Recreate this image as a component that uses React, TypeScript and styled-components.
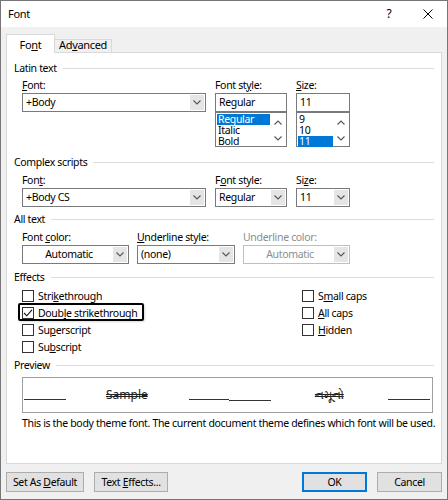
import * as React from 'react'
import styled, { createGlobalStyle } from 'styled-components'

const FONT = `"Noto Sans", "Open Sans", sans-serif`

const GlobalStyle = createGlobalStyle`
  html, body {
    margin: 0;
    padding: 0;
    background: #fff;
  }
  body {
    font-family: ${FONT};
    font-size: 10.5px;
    letter-spacing: -0.33px;
    color: #000;
  }
  * {
    box-sizing: border-box;
  }
`

const Chevron = ({ dir = 'down' }: { dir?: 'up' | 'down' }) => (
  <svg width="8" height="5" viewBox="0 0 8 5">
    <path
      d={dir === 'down' ? 'M0.5 0.5 L4 4 L7.5 0.5' : 'M0.5 4.5 L4 1 L7.5 4.5'}
      fill="none"
      stroke="#555"
      strokeWidth="1.1"
    />
  </svg>
)

type ComboProps = {
  value: string
  center?: boolean
  disabled?: boolean
  drop?: boolean
}

const ComboBox = ({ value, center, disabled, drop = true }: ComboProps) => (
  <Combo $disabled={disabled}>
    <ComboText $center={center}>{value}</ComboText>
    {drop && (
      <DropBtn>
        <Chevron />
      </DropBtn>
    )}
  </Combo>
)

const List = ({ items, selected }: { items: string[]; selected: number }) => (
  <ListBox>
    <ListItems>
      {items.map((it, i) => (
        <ListItem key={it} $selected={i === selected}>
          {it}
        </ListItem>
      ))}
    </ListItems>
    <ScrollCol>
      <Chevron dir="up" />
      <Chevron />
    </ScrollCol>
  </ListBox>
)

const Check = ({ label, checked, focused }: { label: React.ReactNode; checked?: boolean; focused?: boolean }) => (
  <CheckRow $focused={focused}>
    <Box>
      {checked && (
        <svg width="10" height="10" viewBox="0 0 10 10">
          <path d="M1 5 L3.8 7.8 L9 1.8" fill="none" stroke="#111" strokeWidth="1.1" />
        </svg>
      )}
    </Box>
    <span>{label}</span>
  </CheckRow>
)

export default function App() {
  return (
    <>
      <GlobalStyle />
      <Window>
        <TitleBar>
          <TitleText>Font</TitleText>
          <HelpBtn>?</HelpBtn>
          <CloseBtn>
            <svg width="10" height="10" viewBox="0 0 10 10">
              <path d="M0.5 0.5 L9.5 9.5 M9.5 0.5 L0.5 9.5" stroke="#000" strokeWidth="1" />
            </svg>
          </CloseBtn>
        </TitleBar>

        <Body>
          <TabStrip>
            <Tab $active>
              Fo<U>n</U>t
            </Tab>
            <Tab>
              Ad<U>v</U>anced
            </Tab>
          </TabStrip>

          <Panel>
            <Heading>Latin text</Heading>
            <FieldRow $cols="184px 72px 54px">
              <Field>
                <Label>
                  <U>F</U>ont:
                </Label>
                <ComboBox value="+Body" />
              </Field>
              <Field>
                <Label>
                  Font st<U>y</U>le:
                </Label>
                <ComboBox value="Regular" drop={false} />
                <List items={['Regular', 'Italic', 'Bold']} selected={0} />
              </Field>
              <Field>
                <Label>
                  <U>S</U>ize:
                </Label>
                <ComboBox value="11" drop={false} />
                <List items={['9', '10', '11']} selected={2} />
              </Field>
            </FieldRow>

            <Heading $mt={8}>Complex scripts</Heading>
            <FieldRow $cols="184px 72px 54px" $mt={4}>
              <Field>
                <Label>
                  Fon<U>t</U>:
                </Label>
                <ComboBox value="+Body CS" />
              </Field>
              <Field>
                <Label>
                  F<U>o</U>nt style:
                </Label>
                <ComboBox value="Regular" />
              </Field>
              <Field>
                <Label>
                  Si<U>z</U>e:
                </Label>
                <ComboBox value="11" />
              </Field>
            </FieldRow>

            <Heading $mt={5}>All text</Heading>
            <FieldRow $cols="107px 98px 107px" $gap={8} $mt={4}>
              <Field>
                <Label>
                  Font <U>c</U>olor:
                </Label>
                <ComboBox value="Automatic" center />
              </Field>
              <Field>
                <Label>
                  <U>U</U>nderline style:
                </Label>
                <ComboBox value="(none)" />
              </Field>
              <Field>
                <Label $disabled>Underline color:</Label>
                <ComboBox value="Automatic" center disabled />
              </Field>
            </FieldRow>

            <Heading $mt={6}>Effects</Heading>
            <Effects>
              <CheckCol $width={280}>
                <Check label={<>Stri<U>k</U>ethrough</>} />
                <Check label={<>Doub<U>l</U>e strikethrough</>} checked focused />
                <Check label={<>Su<U>p</U>erscript</>} />
                <Check label={<>Su<U>b</U>script</>} />
              </CheckCol>
              <CheckCol>
                <Check label={<>S<U>m</U>all caps</>} />
                <Check label={<><U>A</U>ll caps</>} />
                <Check label={<><U>H</U>idden</>} />
              </CheckCol>
            </Effects>

            <Heading $mt={3}>Preview</Heading>
            <PreviewBox>
              <Rule $w={42} $ml={0} />
              <Sample $ml={40}>Sample</Sample>
              <Rule $w={40} $ml={41} />
              <Rule $w={42} $ml={0} $drop={1} />
              <Sample $ml={44}>નમૂનો</Sample>
              <Rule $w={42} $ml={44} />
            </PreviewBox>
            <Note>This is the body theme font. The current document theme defines which font will be used.</Note>
          </Panel>

          <ButtonRow>
            <Button $w={78}>Set As <U>D</U>efault</Button>
            <Button $w={74}>Text <U>E</U>ffects...</Button>
            <Spacer />
            <Button $w={65} $default>
              OK
            </Button>
            <Button $w={65}>Cancel</Button>
          </ButtonRow>
        </Body>
      </Window>
    </>
  )
}

const Window = styled.div`
  width: 448px;
  height: 500px;
  border: 1px solid #767676;
  background: #f0f0f0;
  display: flex;
  flex-direction: column;
  overflow: hidden;
`

const TitleBar = styled.div`
  height: 26px;
  background: #fff;
  display: flex;
  align-items: center;
  padding-left: 7px;
  line-height: 14px;
  font-size: 11px;
`

const TitleText = styled.div`
  flex: 1;
`

const HelpBtn = styled.div`
  width: 10px;
  text-align: center;
  font-size: 12px;
  margin-right: 29px;
`

const CloseBtn = styled.div`
  width: 10px;
  height: 10px;
  display: flex;
  margin-right: 14px;
`

const Body = styled.div`
  flex: 1;
  padding: 7px 5px 0 5px;
  display: flex;
  flex-direction: column;
`

const TabStrip = styled.div`
  height: 18px;
  display: flex;
  align-items: flex-end;
  position: relative;
  z-index: 1;
`

const Tab = styled.div<{ $active?: boolean }>`
  display: flex;
  align-items: flex-end;
  justify-content: center;
  border: 1px solid #d9d9d9;
  border-bottom: none;
  line-height: 14px;
  font-size: 11px;
  width: ${(p) => (p.$active ? 49 : 57)}px;
  height: ${(p) => (p.$active ? 19 : 13)}px;
  margin-bottom: ${(p) => (p.$active ? -1 : 0)}px;
  padding-bottom: ${(p) => (p.$active ? 1 : 0)}px;
  background: ${(p) => (p.$active ? '#fff' : '#f0f0f0')};
  border-left: ${(p) => (p.$active ? '1px solid #d9d9d9' : 'none')};
`

const Panel = styled.div`
  height: 412px;
  background: #fff;
  border: 1px solid #d9d9d9;
  padding: 8px 7px 0 7px;
`

const Heading = styled.div<{ $mt?: number }>`
  display: flex;
  align-items: center;
  height: 14px;
  line-height: 14px;
  margin-top: ${(p) => p.$mt ?? 0}px;
  &::after {
    content: '';
    flex: 1;
    height: 1px;
    background: #dcdcdc;
    margin-left: 6px;
  }
`

const FieldRow = styled.div<{ $cols: string; $gap?: number; $mt?: number }>`
  display: grid;
  grid-template-columns: ${(p) => p.$cols};
  column-gap: ${(p) => p.$gap ?? 9}px;
  align-items: start;
  padding-left: 8px;
  margin-top: ${(p) => p.$mt ?? 3}px;
`

const Field = styled.div`
  display: flex;
  flex-direction: column;
`

const Label = styled.div<{ $disabled?: boolean }>`
  height: 14px;
  line-height: 14px;
  margin-bottom: 1px;
  color: ${(p) => (p.$disabled ? '#8d8d8d' : '#000')};
`

const Combo = styled.div<{ $disabled?: boolean }>`
  height: 19px;
  display: flex;
  background: #fff;
  border: 1px solid ${(p) => (p.$disabled ? '#bfbfbf' : '#7a7a7a')};
  color: ${(p) => (p.$disabled ? '#8d8d8d' : '#000')};
`

const ComboText = styled.div<{ $center?: boolean }>`
  flex: 1;
  line-height: 17px;
  padding-left: 3px;
  text-align: ${(p) => (p.$center ? 'center' : 'left')};
  white-space: nowrap;
  overflow: hidden;
`

const DropBtn = styled.div`
  width: 14px;
  margin: 1px;
  background: #e5e5e5;
  display: flex;
  align-items: center;
  justify-content: center;
`

const ListBox = styled.div`
  height: 35px;
  display: flex;
  border: 1px solid #7a7a7a;
  background: #fff;
  padding: 1px 0 0 1px;
`

const ListItems = styled.div`
  flex: 1;
  display: flex;
  flex-direction: column;
`

const ListItem = styled.div<{ $selected?: boolean }>`
  height: 11px;
  line-height: 11px;
  padding-left: 1px;
  background: ${(p) => (p.$selected ? '#0078d7' : 'transparent')};
  color: ${(p) => (p.$selected ? '#fff' : '#000')};
`

const ScrollCol = styled.div`
  width: 16px;
  display: flex;
  flex-direction: column;
  align-items: center;
  justify-content: space-between;
  padding: 6px 0 5px;
`

const Effects = styled.div`
  display: flex;
  padding-left: 8px;
  margin-top: 3px;
`

const CheckCol = styled.div<{ $width?: number }>`
  display: flex;
  flex-direction: column;
  align-items: flex-start;
  width: ${(p) => (p.$width ? `${p.$width}px` : 'auto')};
`

const CheckRow = styled.div<{ $focused?: boolean }>`
  position: relative;
  height: 17px;
  display: flex;
  align-items: center;
  gap: 4px;
  line-height: 14px;
  &::after {
    content: '';
    display: ${(p) => (p.$focused ? 'block' : 'none')};
    position: absolute;
    left: -4px;
    right: -7px;
    top: -1px;
    bottom: 0px;
    border: 2px solid #000;
    border-radius: 2px;
    box-shadow: 1px 1px 2px rgba(0, 0, 0, 0.15);
  }
`

const Box = styled.div`
  width: 12px;
  height: 12px;
  border: 1px solid #333;
  background: #fff;
  display: flex;
  align-items: center;
  justify-content: center;
`

const PreviewBox = styled.div`
  margin: 5px 0 0 8px;
  width: 411px;
  height: 36px;
  border: 1px solid #a0a0a0;
  display: flex;
  align-items: center;
  padding-left: 1px;
`

const Rule = styled.div<{ $w: number; $ml: number; $drop?: number }>`
  width: ${(p) => p.$w}px;
  height: 1.5px;
  background: #333;
  margin-left: ${(p) => p.$ml}px;
  margin-top: ${(p) => 9 + (p.$drop ?? 0) * 2}px;
`

const Sample = styled.div<{ $ml: number }>`
  margin-left: ${(p) => p.$ml}px;
  font-size: 12px;
  letter-spacing: 0;
  line-height: 14px;
  color: #222;
  text-decoration: line-through double;
  text-decoration-color: #222;
  white-space: nowrap;
`

const Note = styled.div`
  margin-top: 3px;
  padding-left: 8px;
  line-height: 14px;
  white-space: nowrap;
`

const ButtonRow = styled.div`
  margin-top: 8px;
  height: 20px;
  display: flex;
  gap: 10px;
`

const Spacer = styled.div`
  flex: 1;
`

const Button = styled.div<{ $w: number; $default?: boolean }>`
  width: ${(p) => p.$w}px;
  height: 20px;
  background: #e1e1e1;
  border: 1px solid ${(p) => (p.$default ? '#0078d7' : '#adadad')};
  box-shadow: ${(p) => (p.$default ? 'inset 0 0 0 1px #0078d7' : 'none')};
  display: flex;
  align-items: center;
  justify-content: center;
  line-height: 14px;
  white-space: pre;
`

const U = styled.span`
  text-decoration: underline;
  text-underline-offset: 1px;
`
